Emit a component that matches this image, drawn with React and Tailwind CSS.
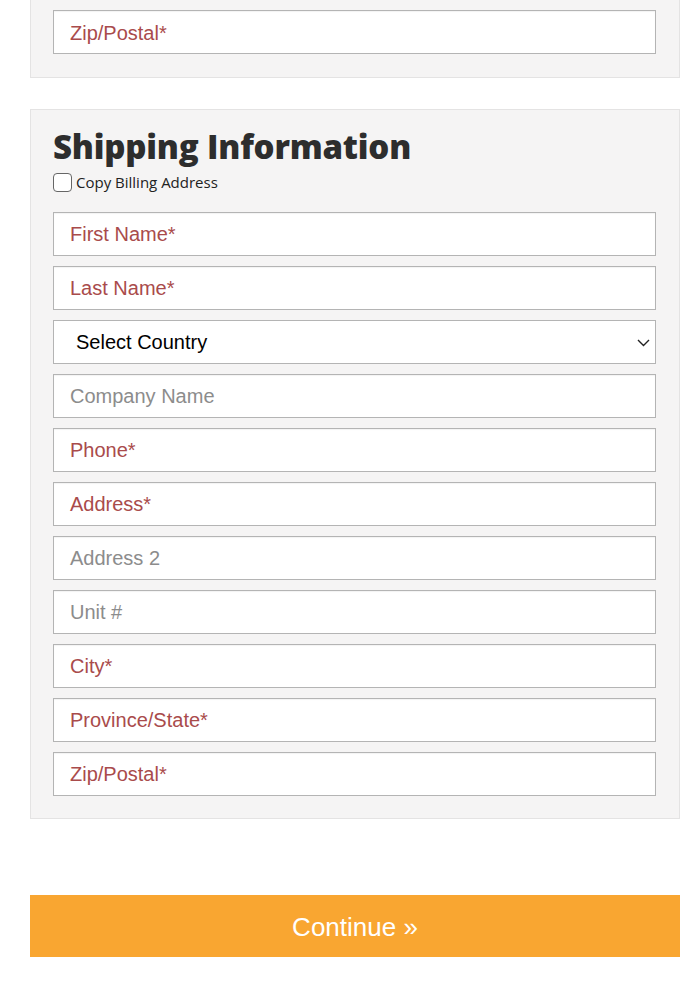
const fields = [
  { label: "First Name*", required: true },
  { label: "Last Name*", required: true },
  { select: true },
  { label: "Company Name" },
  { label: "Phone*", required: true },
  { label: "Address*", required: true },
  { label: "Address 2" },
  { label: "Unit #" },
  { label: "City*", required: true },
  { label: "Province/State*", required: true },
  { label: "Zip/Postal*", required: true },
];

function Field({ label, required }) {
  return (
    <div className="h-[44px] bg-white border border-[#b4b4b4] flex items-center pl-4 pt-[1px] shadow-[inset_0_1px_1px_rgba(0,0,0,0.05)]">
      <span className={`text-[20px] ${required ? "text-[#a94b4b]" : "text-[#8c8c8c]"}`}>
        {label}
      </span>
    </div>
  );
}

function CountrySelect() {
  return (
    <div className="h-[44px] bg-white border border-[#b4b4b4] flex items-center justify-between pl-[22px] pr-[5px] pt-[1px]">
      <span className="text-[20px] text-black">Select Country</span>
      <svg width="13" height="8" viewBox="0 0 13 8" fill="none" className="mt-[1px]">
        <path d="M1 1l5.5 5.5L12 1" stroke="#222" strokeWidth="1.4" />
      </svg>
    </div>
  );
}

export default function App() {
  return (
    <div className="min-h-screen bg-white font-['Liberation_Sans',Arial,sans-serif] w-[700px]">
      <div className="mx-[30px] w-[650px] bg-[#f5f4f4] border border-[#e4e3e3] border-t-0 pl-[22px] pr-[23px] pt-[10px] pb-[23px]">
        <Field label="Zip/Postal*" required />
      </div>

      <div className="mx-[30px] w-[650px] mt-[31px] bg-[#f5f4f4] border border-[#e4e3e3] pl-[22px] pr-[23px] pt-[16px] pb-[22px]">
        <h2 className="font-['Open_Sans',sans-serif] font-extrabold text-[33px] leading-[42px] text-[#2d2d2d] tracking-[-0.2px]">
          Shipping Information
        </h2>
        <label className="flex items-center gap-[4px] mt-[3px] font-['Open_Sans',sans-serif] text-[15px] text-[#222]">
          <span className="w-[19px] h-[19px] rounded-[4px] border border-[#666] bg-white inline-block" />
          Copy Billing Address
        </label>
        <div className="mt-[18px] flex flex-col gap-[10px]">
          {fields.map((f, i) =>
            f.select ? <CountrySelect key={i} /> : <Field key={i} label={f.label} required={f.required} />
          )}
        </div>
      </div>

      <button className="mx-[30px] mt-[76px] w-[650px] h-[62px] bg-[#f9a631] text-white text-[26px] flex items-center justify-center pt-[3px]">
        Continue »
      </button>
    </div>
  );
}
